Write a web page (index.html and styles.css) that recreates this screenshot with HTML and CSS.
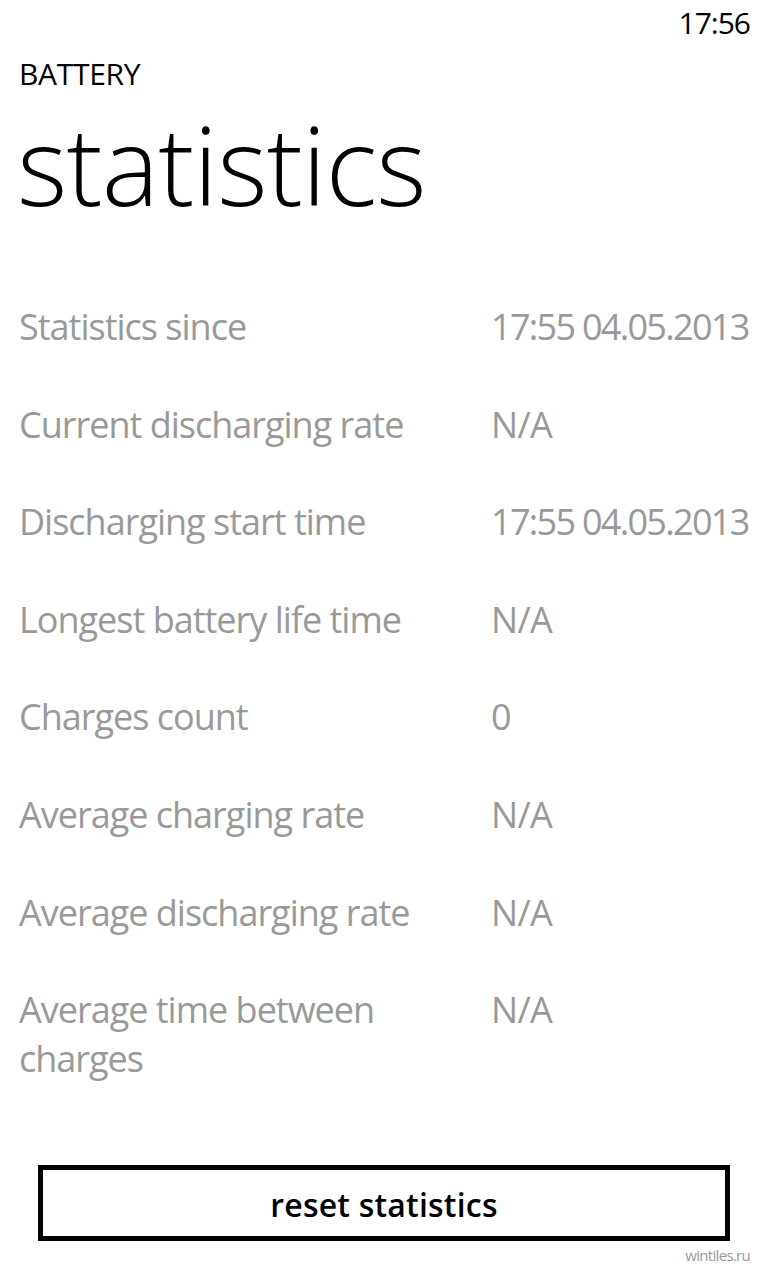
FILE: index.html
```html
<html>
<head>
    <link rel="stylesheet" href="styles.css">
</head>
<body>
    <div class="status">17:56</div>

    <div class="header">
        <div class="app-name">BATTERY</div>
        <div class="page-title">statistics</div>
    </div>

    <div class="stats">
        <div class="label">Statistics since</div>
        <div class="value date">17:55 04.05.2013</div>

        <div class="label">Current discharging rate</div>
        <div class="value">N/A</div>

        <div class="label">Discharging start time</div>
        <div class="value date">17:55 04.05.2013</div>

        <div class="label">Longest battery life time</div>
        <div class="value">N/A</div>

        <div class="label">Charges count</div>
        <div class="value">0</div>

        <div class="label">Average charging rate</div>
        <div class="value">N/A</div>

        <div class="label">Average discharging rate</div>
        <div class="value">N/A</div>

        <div class="label">Average time between charges</div>
        <div class="value">N/A</div>
    </div>

    <div class="reset-button">reset statistics</div>
    <div class="watermark">wintiles.ru</div>
</body>
</html>
```

FILE: styles.css
```css
body {
    margin: 0;
    background: #ffffff;
    color: #000000;
    font-family: 'Open Sans', 'Noto Sans', sans-serif;
}
.status {
    height: 51px;
    box-sizing: border-box;
    padding: 3px 18px 0 0;
    text-align: right;
    font-size: 30px;
    line-height: 40px;
    letter-spacing: -1px;
}
.header {
    padding: 3px 0 0 19px;
}
.app-name {
    font-size: 30px;
    line-height: 40px;
    letter-spacing: -0.3px;
}
.page-title {
    margin: 11px 0 0 -2px;
    font-size: 108px;
    font-weight: 300;
    line-height: 120px;
    letter-spacing: -0.8px;
}
.stats {
    display: grid;
    grid-template-columns: 471px 1fr;
    row-gap: 48.6px;
    margin-top: 77px;
    padding-left: 19px;
    color: #999999;
    font-size: 36px;
    line-height: 49px;
    letter-spacing: -1px;
}
.label {
    padding-right: 20px;
}
.value {
    padding-left: 1px;
    letter-spacing: -0.6px;
}
.value.date {
    letter-spacing: -1.7px;
}
.reset-button {
    box-sizing: border-box;
    width: 692px;
    height: 76px;
    margin: 82px 0 0 38px;
    border: 5px solid #000000;
    text-align: center;
    font-size: 32px;
    font-weight: 600;
    line-height: 70px;
    letter-spacing: 0.2px;
}
.watermark {
    margin-top: 4px;
    padding-right: 18px;
    text-align: right;
    color: #999999;
    font-size: 15px;
    line-height: 20px;
    letter-spacing: -0.7px;
}
```
